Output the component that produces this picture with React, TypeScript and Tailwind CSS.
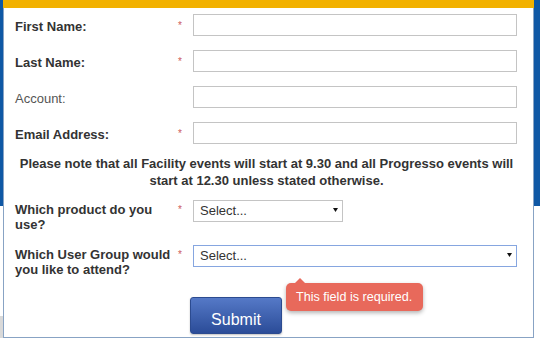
const fields = [
  { label: 'First Name:', required: true },
  { label: 'Last Name:', required: true },
  { label: 'Account:', required: false },
  { label: 'Email Address:', required: true },
];

function Star({ show }: { show: boolean }) {
  return (
    <span className="w-[17px] shrink-0 pl-[2px] pt-[4px] text-[10px] leading-[15px] text-[#cc5a5a]">
      {show ? '*' : ''}
    </span>
  );
}

function Caret() {
  return (
    <svg className="pointer-events-none absolute right-[5px] top-1/2 -translate-y-1/2" width="5" height="4" viewBox="0 0 5 4">
      <path d="M0 0h5L2.5 4z" fill="#111" />
    </svg>
  );
}

export default function App() {
  return (
    <div className="flex h-[349px] w-[540px] overflow-hidden bg-white font-['Liberation_Sans',Arial,sans-serif] text-[#333]">
      <div className="w-[3px] shrink-0 bg-[linear-gradient(to_bottom,#0f58a5_206px,#fff_206px,#fff_316px,#d9d9d9_316px,#d9d9d9_338px,#fff_338px)]" />

      <div className="relative flex h-[338px] w-[531px] shrink-0 flex-col border-x border-b border-[#88a3c4] bg-white">
        <div className="-mx-px h-[8px] bg-[#f2b100]" />

        <div className="flex flex-col pl-[11px] pr-[15px] pt-[6px]">
          <div className="flex flex-col gap-[14px]">
            {fields.map((f) => (
              <div key={f.label} className="flex h-[22px] items-start">
                <label
                  className={
                    f.required
                      ? 'w-[161px] shrink-0 pt-[5px] text-[13px] font-bold leading-[15px] text-[#333]'
                      : 'w-[161px] shrink-0 pt-[5px] text-[13px] leading-[15px] text-[#555]'
                  }
                >
                  {f.label}
                </label>
                <Star show={f.required} />
                <input className="h-[22px] w-[324px] border border-[#c4c4c4] bg-white px-[6px] text-[13px] outline-none" />
              </div>
            ))}
          </div>

          <p className="mt-[11px] text-center text-[13px] font-bold leading-[17px] text-[#333]">
            Please note that all Facility events will start at 9.30 and all Progresso events will start at 12.30 unless stated otherwise.
          </p>

          <div className="mt-[9px] flex h-[45px] items-start">
            <label className="w-[161px] shrink-0 pt-[4px] text-[13px] font-bold leading-[15px]">
              Which product do you use?
            </label>
            <Star show />
            <div className="relative">
              <select className="h-[22px] w-[150px] appearance-none rounded-none border border-[#c4c4c4] bg-white pl-[6px] text-[13px] text-[#333] outline-none">
                <option>Select...</option>
              </select>
              <Caret />
            </div>
          </div>

          <div className="flex h-[54px] items-start">
            <label className="w-[161px] shrink-0 pt-[4px] text-[13px] font-bold leading-[15px]">
              Which User Group would you like to attend?
            </label>
            <Star show />
            <div className="relative">
              <select className="h-[22px] w-[324px] appearance-none rounded-none border border-[#86a6e0] bg-white pl-[6px] text-[13px] text-[#333] outline-none">
                <option>Select...</option>
              </select>
              <Caret />
            </div>
          </div>

          <button className="ml-[175px] flex h-[37px] w-[92px] justify-center rounded-[3px] border border-[#2c4b90] bg-[linear-gradient(to_bottom,#5579c7,#2b4c98)] pt-[13px] text-[16px] leading-[18px] text-white shadow-[0_1px_2px_rgba(0,0,0,0.25)]">
            Submit
          </button>
        </div>

        <div className="absolute left-[282px] top-[283px] flex h-[28px] w-[137px] items-center rounded-[5px] bg-[#e8695b] pl-[10px] text-[12.6px] text-white shadow-[0_2px_4px_rgba(0,0,0,0.3)]">
          <span className="absolute -top-[5px] left-[9px] h-0 w-0 border-x-[5px] border-b-[5px] border-x-transparent border-b-[#e8695b]" />
          This field is required.
        </div>
      </div>

      <div className="w-[6px] shrink-0 bg-[linear-gradient(to_bottom,#0f58a5_206px,#fff_206px)]" />
    </div>
  );
}
